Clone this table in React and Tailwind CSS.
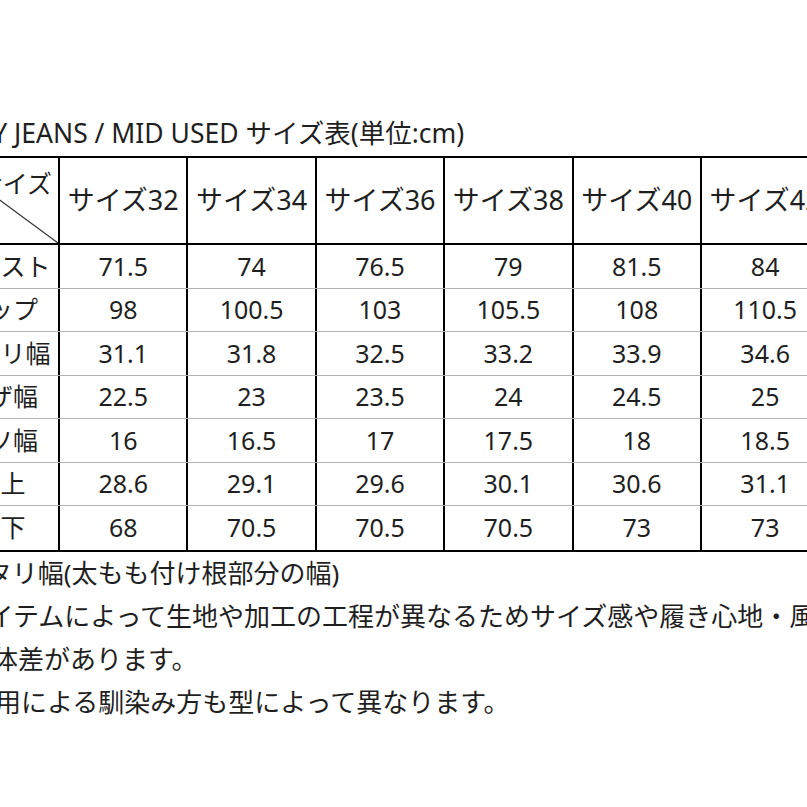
const headers = ["サイズ32", "サイズ34", "サイズ36", "サイズ38", "サイズ40", "サイズ42"];

const rows = [
  ["ウエスト", "71.5", "74", "76.5", "79", "81.5", "84"],
  ["ヒップ", "98", "100.5", "103", "105.5", "108", "110.5"],
  ["ワタリ幅", "31.1", "31.8", "32.5", "33.2", "33.9", "34.6"],
  ["ヒザ幅", "22.5", "23", "23.5", "24", "24.5", "25"],
  ["スソ幅", "16", "16.5", "17", "17.5", "18", "18.5"],
  ["股上", "28.6", "29.1", "29.6", "30.1", "30.6", "31.1"],
  ["股下", "68", "70.5", "70.5", "70.5", "73", "73"],
];

const font = "font-['Noto_Sans','Noto_Sans_CJK_JP',sans-serif]";

export default function App() {
  return (
    <div className={`w-[807px] h-[807px] overflow-hidden bg-white text-[#1f1f1f] ${font}`}>
      <div className="pt-[118px]">
        {/* タイトル */}
        <div className="h-[30px] leading-[30px] text-[26.5px] whitespace-nowrap ml-[-88px]">
          SKINNY JEANS / MID USED サイズ表(単位:cm)
        </div>

        {/* サイズ表 */}
        <div className="mt-[8px] ml-[-57px] w-[887px] border-t-2 border-b-2 border-black">
          <div className="grid grid-cols-[117px_repeat(6,128.4px)] h-[87px] border-b-2 border-black">
            <div className="relative border-r-2 border-black">
              <svg className="absolute left-0 top-0" width="115" height="85">
                <line x1="0" y1="0" x2="115" y2="85" stroke="#333" strokeWidth="1.2" />
              </svg>
              <div className="absolute right-[6px] top-[10px] text-[25px] leading-[30px]">サイズ</div>
            </div>
            {headers.map((h) => (
              <div
                key={h}
                className="flex items-center justify-center border-r-2 border-black text-[27px] whitespace-nowrap"
              >
                {h}
              </div>
            ))}
          </div>

          {rows.map((r, i) => (
            <div
              key={r[0]}
              className={`grid grid-cols-[117px_repeat(6,128.4px)] h-[43.5px] ${
                i < rows.length - 1 ? "border-b border-[#b3b3b3]" : ""
              }`}
            >
              {r.map((c, j) => (
                <div
                  key={j}
                  className="flex items-center justify-center border-r-2 border-black text-[25px] whitespace-nowrap"
                >
                  {c}
                </div>
              ))}
            </div>
          ))}
        </div>

        {/* 注意書き */}
        <div className="text-[26px] leading-[43px] whitespace-nowrap">
          <p className="ml-[-62px]">※ワタリ幅(太もも付け根部分の幅)</p>
          <p className="ml-[-59px]">※アイテムによって生地や加工の工程が異なるためサイズ感や履き心地・風合いに</p>
          <p className="ml-[-34px]">個体差があります。</p>
          <p className="ml-[-31px]">着用による馴染み方も型によって異なります。</p>
        </div>
      </div>
    </div>
  );
}
